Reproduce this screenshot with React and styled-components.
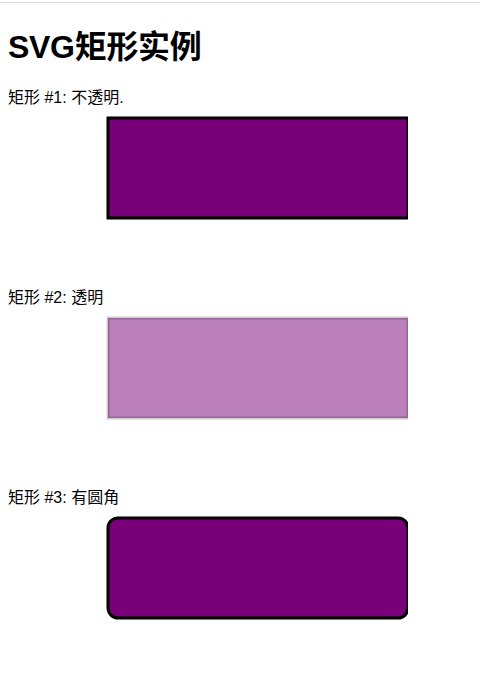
import React from "react";
import styled, { createGlobalStyle } from "styled-components";

const GlobalStyle = createGlobalStyle`
  html, body {
    margin: 0;
    padding: 0;
    background: #ffffff;
  }
  body {
    font-family: "Noto Sans CJK SC", "Noto Sans", sans-serif;
    color: #000000;
  }
`;

const Page = styled.div`
  border-top: 1px solid #dcdcdc;
  margin-top: 2px;
  padding: 0 8px;
`;

const Title = styled.h1`
  margin: 24px 0 21px;
  font-size: 32px;
  line-height: 40px;
  font-weight: 700;
  font-family: "Liberation Sans", "Noto Sans CJK SC", sans-serif;
  letter-spacing: -0.3px;
`;

const Section = styled.section`
  display: flex;
  flex-direction: column;
`;

const Label = styled.div`
  font-size: 16px;
  line-height: 20px;
  font-family: "Liberation Sans", "Noto Sans CJK SC", sans-serif;
`;

const Canvas = styled.svg`
  display: block;
  width: 400px;
  height: 180px;
`;

const shapes = [
  {
    label: "矩形 #1: 不透明.",
    rx: 0,
    fillOpacity: 1,
    strokeOpacity: 1,
  },
  {
    label: "矩形 #2: 透明",
    rx: 0,
    fillOpacity: 0.5,
    strokeOpacity: 0.2,
  },
  {
    label: "矩形 #3: 有圆角",
    rx: 10,
    fillOpacity: 1,
    strokeOpacity: 1,
  },
];

export default function App() {
  return (
    <>
      <GlobalStyle />
      <Page>
        <Title>SVG矩形实例</Title>
        {shapes.map((s) => (
          <Section key={s.label}>
            <Label>{s.label}</Label>
            <Canvas viewBox="0 0 400 180">
              <rect
                x="100"
                y="10"
                width="300"
                height="100"
                rx={s.rx}
                ry={s.rx}
                fill="#780078"
                fillOpacity={s.fillOpacity}
                stroke="#000000"
                strokeOpacity={s.strokeOpacity}
                strokeWidth="3"
              />
            </Canvas>
          </Section>
        ))}
      </Page>
    </>
  );
}
